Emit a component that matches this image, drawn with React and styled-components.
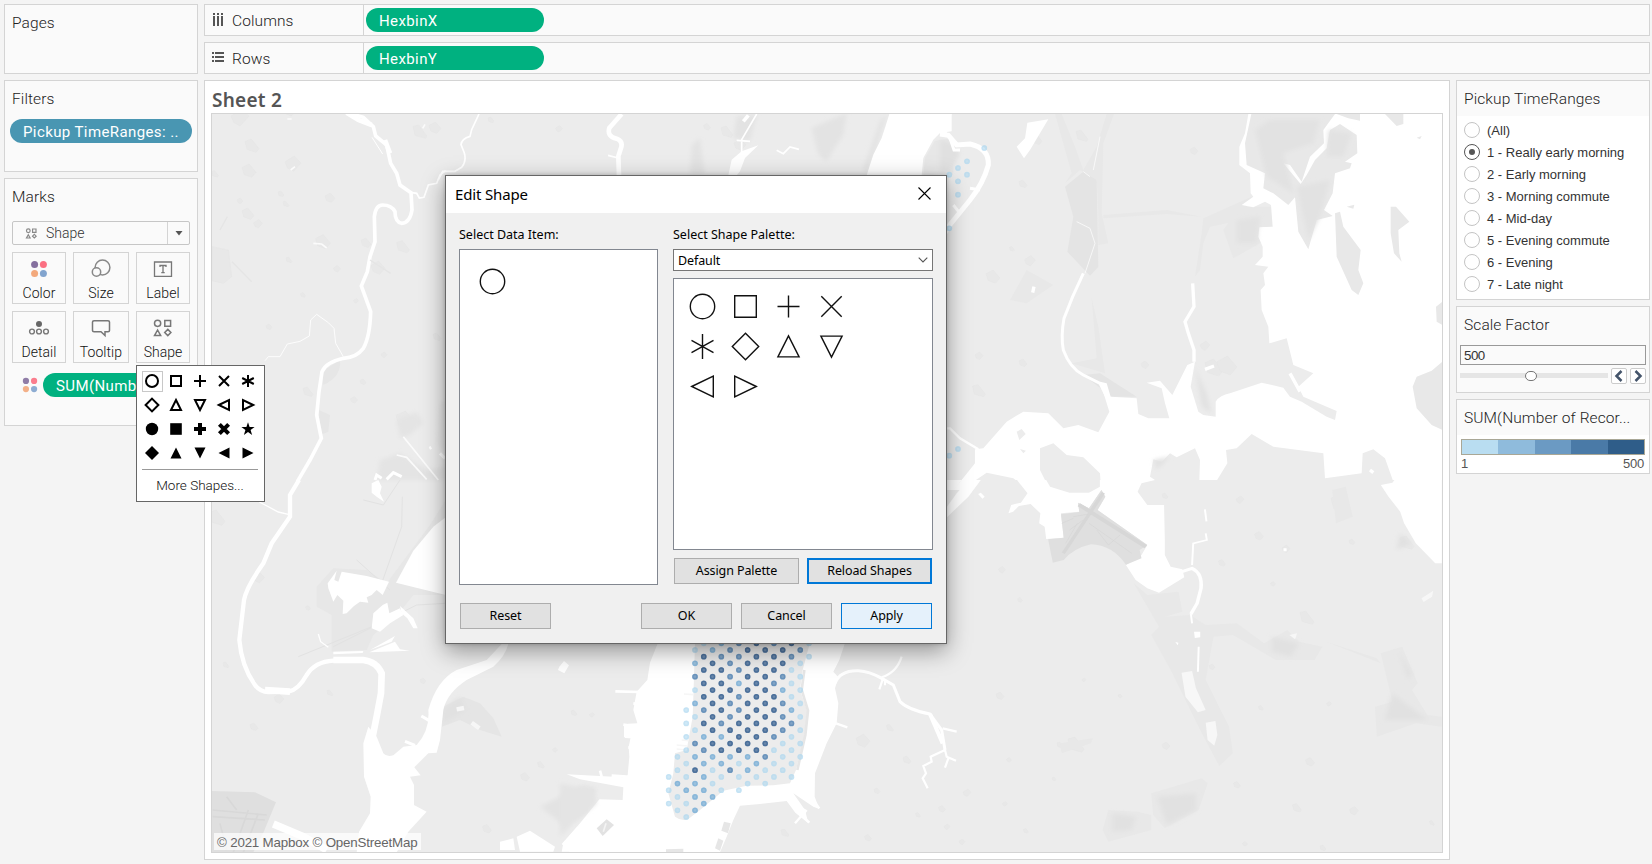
import React from "react";
import styled, { createGlobalStyle, css } from "styled-components";

const GlobalStyle = createGlobalStyle`
  * { box-sizing: border-box; }
  body { margin: 0; background: #f4f4f4; color: #333; overflow: hidden;
    font-family: Roboto, "Liberation Sans", sans-serif; }
`;

const Workbook = styled.div`
  position: relative;
  display: grid;
  grid-template-columns: 194px minmax(0, 1fr);
  column-gap: 6px;
  width: 1652px;
  height: 864px;
  padding: 4px 2px 4px 4px;
`;
const SideColumn = styled.aside`
  display: flex;
  flex-direction: column;
  gap: 6px;
`;
const Panel = styled.section`
  height: ${(p) => p.$height}px;
  border: 1px solid #d4d4d4;
  background: #fafafa;
`;
const PanelTitle = styled.h2`
  margin: 0;
  padding: 8px 0 0 7px;
  font-size: 15.5px;
  line-height: 20px;
  font-weight: 300;
  letter-spacing: ${(p) => p.$spacing ?? 0.1}px;
  color: #222;
  white-space: nowrap;
`;
const Pill = styled.div`
  display: flex;
  align-items: center;
  width: ${(p) => p.$width}px;
  height: 24px;
  padding: 1px 13px 0;
  border-radius: 12px;
  background: ${(p) => p.$color ?? "#00b180"};
  color: #fff;
  font-size: 15px;
  letter-spacing: ${(p) => p.$spacing ?? 0.4}px;
  white-space: nowrap;
  overflow: hidden;
`;
const FilterPills = styled.div`
  padding: 10px 0 0 5px;
`;
const MarksBody = styled.div`
  padding: 14px 7px 0;
`;
const MarkType = styled.div`
  display: flex;
  align-items: center;
  height: 24px;
  border: 1px solid #c6c6c6;
  border-radius: 2px;
  font-size: 14px;
  font-weight: 300;
  color: #333;
  & > svg:first-child { margin: 0 8px 0 12px; }
`;
const MarkArrow = styled.span`
  display: grid;
  place-items: center;
  width: 22px;
  height: 22px;
  margin-left: auto;
  border-left: 1px solid #d4d4d4;
`;
const MarkGrid = styled.div`
  display: grid;
  grid-template-columns: 54px 56px 54px;
  gap: 7px;
  margin-top: 7px;
`;
const MarkButton = styled.div`
  display: flex;
  flex-direction: column;
  align-items: center;
  height: 52px;
  padding-top: 5px;
  border: 1px solid #d4d4d4;
  font-size: 14px;
  font-weight: 300;
  line-height: 18px;
  letter-spacing: 0.05px;
  color: #111;
  & > svg { margin-bottom: 4px; }
`;
const EncodingRow = styled.div`
  display: flex;
  align-items: center;
  gap: 5px;
  margin-top: 10px;
  padding-left: 10px;
`;

const MainColumn = styled.main`
  display: flex;
  flex-direction: column;
  gap: 6px;
`;
const Shelf = styled.div`
  display: flex;
  align-items: center;
  height: 32px;
  border: 1px solid #d4d4d4;
  background: #fafafa;
`;
const ShelfLabel = styled.div`
  display: flex;
  align-items: center;
  gap: 8px;
  width: 159px;
  height: 30px;
  margin-right: 2px;
  padding: 1px 0 0 7px;
  border-right: 1px solid #d4d4d4;
  font-size: 15.5px;
  font-weight: 300;
  letter-spacing: 0.1px;
  color: #222;
  & > svg { margin-top: -2px; }
`;
const Content = styled.div`
  display: grid;
  grid-template-columns: 1246px 194px;
  column-gap: 6px;
`;
const Sheet = styled.section`
  height: 780px;
  padding: 7px 6px 0;
  border: 1px solid #d4d4d4;
  background: #fff;
`;
const SheetTitle = styled.h1`
  margin: 0;
  height: 25px;
  padding-left: 1px;
  font: 600 19px/24px "Noto Sans", sans-serif;
  letter-spacing: 0.25px;
  color: #555;
`;
const MapFrame = styled.div`
  position: relative;
  width: 1232px;
  height: 740px;
  border: 1px solid #d4d4d4;
  & > svg { display: block; }
`;
const Attribution = styled.div`
  position: absolute;
  left: 2px;
  bottom: 2px;
  width: 207px;
  height: 17px;
  padding-left: 3px;
  background: rgba(255, 255, 255, 0.72);
  color: #666;
  font: 13.33px/19px "Liberation Sans", sans-serif;
  letter-spacing: -0.18px;
  white-space: nowrap;
`;

const Legends = styled.aside`
  display: flex;
  flex-direction: column;
  gap: 6px;
`;
const Card = styled.section`
  height: ${(p) => p.$height}px;
  border: 1px solid #d4d4d4;
  background: ${(p) => (p.$grey ? "#fafafa" : "#fff")};
`;
const CardHeader = styled.div`
  height: 35px;
  background: #fafafa;
`;
const RadioList = styled.div`
  padding: 3px 0 0 7px;
`;
const RadioRow = styled.div`
  display: flex;
  align-items: center;
  gap: 7px;
  height: 22px;
  font: 13px/22px "Liberation Sans", sans-serif;
  color: #333;
`;
const RadioText = styled.span`
  padding-top: 2px;
`;
const Radio = styled.span`
  display: grid;
  place-items: center;
  width: 16px;
  height: 16px;
  border: 1px solid ${(p) => (p.$on ? "#555" : "#c4c4c4")};
  border-radius: 50%;
  background: #fff;
  &::after {
    content: "";
    width: 6px;
    height: 6px;
    border-radius: 50%;
    background: ${(p) => (p.$on ? "#555" : "transparent")};
  }
`;
const NumberBox = styled.div`
  width: 186px;
  height: 20px;
  margin: 10px 0 0 3px;
  padding-left: 3px;
  border: 1px solid #999;
  font: 13.33px/19px "Liberation Sans", sans-serif;
  letter-spacing: -0.5px;
  color: #333;
`;
const SliderRow = styled.div`
  display: flex;
  align-items: center;
  gap: 3px;
  margin: 3px 0 0 3px;
`;
const Track = styled.div`
  display: flex;
  align-items: center;
  width: 148px;
  height: 5px;
  margin-top: -1px;
  background: #e5e5e5;
`;
const Knob = styled.span`
  width: 12px;
  height: 10px;
  margin-left: 65px;
  border: 1px solid #777;
  border-radius: 5px;
  background: #fff;
`;
const Stepper = styled.span`
  display: grid;
  place-items: center;
  width: 16px;
  height: 16px;
  border: 1px solid #ccc;
  border-radius: 2px;
  background: #fff;
`;
const Ramp = styled.div`
  display: flex;
  width: 184px;
  height: 16px;
  margin: 4px 0 0 4px;
  border: 1px solid #a9a796;
`;
const RampStep = styled.span`
  flex: 1;
  background: ${(p) => p.$color};
`;
const RampLabels = styled.div`
  display: flex;
  justify-content: space-between;
  padding: 0 5px 0 4px;
  font: 13px/17px "Liberation Sans", sans-serif;
  letter-spacing: -0.2px;
  color: #555;
`;

const ShapeMenu = styled.div`
  position: absolute;
  left: 136px;
  top: 365px;
  width: 129px;
  height: 137px;
  padding: 3px 5px;
  border: 1px solid #666;
  background: #fff;
`;
const ShapeGrid = styled.div`
  display: grid;
  grid-template-columns: repeat(5, 24px);
  grid-auto-rows: 24px;
  margin-left: -2px;
`;
const ShapeCell = styled.span`
  display: grid;
  place-items: center;
  width: 21px;
  height: 21px;
  margin: 2px;
  border: 1px solid ${(p) => (p.$on ? "#c8c8c8" : "transparent")};
`;
const MenuFooter = styled.div`
  width: 116px;
  margin-top: 4px;
  padding-top: 5px;
  border-top: 1px solid #999;
  font-size: 13.5px;
  font-weight: 300;
  line-height: 20px;
  text-align: center;
  color: #111;
`;

const Dialog = styled.div`
  position: absolute;
  left: 445px;
  top: 175px;
  width: 502px;
  height: 469px;
  border: 1px solid #666;
  background: #f0f0f0;
  color: #000;
  box-shadow: 0 7px 22px rgba(0, 0, 0, 0.38), 0 0 4px rgba(0, 0, 0, 0.2);
  font-family: "Noto Sans", sans-serif;
`;
const DialogBar = styled.header`
  display: flex;
  align-items: center;
  justify-content: space-between;
  height: 37px;
  padding: 0 15px 2px 9px;
  background: #fff;
  font-size: 15px;
  letter-spacing: -0.15px;
`;
const DialogColumns = styled.div`
  display: grid;
  grid-template-columns: 199px 260px;
  column-gap: 15px;
  height: 376px;
  padding: 12px 0 0 13px;
`;
const Field = styled.div`
  display: flex;
  flex-direction: column;
`;
const FieldLabel = styled.div`
  height: 24px;
  font-size: 12.5px;
  line-height: 19px;
`;
const Select = styled.div`
  display: flex;
  align-items: center;
  justify-content: space-between;
  height: 22px;
  margin-bottom: 7px;
  padding: 0 4px;
  border: 1px solid #767676;
  background: #fff;
  font-size: 12.5px;
  letter-spacing: -0.1px;
`;
const ListBox = styled.div`
  height: ${(p) => p.$height}px;
  padding: ${(p) => p.$pad};
  border: 1px solid #828790;
  background: #fff;
`;
const Palette = styled.div`
  display: grid;
  grid-template-columns: repeat(4, 43px);
  grid-auto-rows: 40px;
  place-items: center;
`;
const ButtonRow = styled.div`
  display: flex;
  gap: ${(p) => p.$gap}px;
  padding: ${(p) => p.$pad};
`;
const Button = styled.button`
  width: ${(p) => p.$width ?? 91}px;
  height: 26px;
  padding: 0;
  border: 1px solid #adadad;
  background: #e1e1e1;
  color: #000;
  font: 12.5px/22px "Noto Sans", sans-serif;
  letter-spacing: -0.1px;
  ${(p) => p.$focus && css`border: 2px solid #0078d7;`}
  ${(p) => p.$hot && css`border-color: #0078d7; background: #e5f1fb;`}
  ${(p) => p.$push && css`margin-right: 81px;`}
`;

/* ---------- shape glyphs ---------- */
const OUTLINES = {
  circle: <circle r="12.2" />,
  square: <path d="M-10.8-10.8H10.8V10.8H-10.8Z" />,
  plus: <path d="M-11 0H11M0-11V11" />,
  cross: <path d="M-10.2-10.2L10.2 10.2M10.2-10.2L-10.2 10.2" />,
  star: <path d="M0-12.5V12.5M-11-6.2L11 6.2M11-6.2L-11 6.2" />,
  diamond: <path d="M0-13.2L13.2 0L0 13.2L-13.2 0Z" />,
  up: <path d="M0-10.6L10.6 10.4H-10.6Z" />,
  down: <path d="M0 10.6L10.6-10.4H-10.6Z" />,
  left: <path d="M-10.8 0L10.8-10.4V10.4Z" />,
  right: <path d="M10.8 0L-10.8-10.4V10.4Z" />,
};
const OUTLINE_NAMES = Object.keys(OUTLINES);

const PaletteGlyph = ({ name }) => (
  <svg width="29" height="29" viewBox="-14.5 -14.5 29 29" fill="none" stroke="#111" strokeWidth="1.4">
    {OUTLINES[name]}
  </svg>
);

const MENU = [
  <circle r="6" />,
  <path d="M-5-5H5V5H-5Z" />,
  <path d="M-6 0H6M0-6V6" />,
  <path d="M-5-5L5 5M5-5L-5 5" />,
  <path d="M0-6V6M-5.8-3L5.8 3M5.8-3L-5.8 3" />,
  <path d="M0-6.4L6.4 0L0 6.4L-6.4 0Z" />,
  <path d="M0-5L5 5H-5Z" />,
  <path d="M0 5L5-5H-5Z" />,
  <path d="M-5.2 0L5-5V5Z" />,
  <path d="M5.2 0L-5-5V5Z" />,
  <circle r="6.2" fill="#000" stroke="none" />,
  <path d="M-5.8-5.8H5.8V5.8H-5.8Z" fill="#000" stroke="none" />,
  <path d="M-6 0H6M0-6V6" strokeWidth="4" />,
  <path d="M-4.6-4.6L4.6 4.6M4.6-4.6L-4.6 4.6" strokeWidth="4" />,
  <path d="M0-6.8L1.6-2H6.6L2.6 1L4.1 6L0 3L-4.1 6L-2.6 1L-6.6-2H-1.6Z" fill="#000" stroke="none" />,
  <path d="M0-7L7 0L0 7L-7 0Z" fill="#000" stroke="none" />,
  <path d="M0-5.5L5.5 5.5H-5.5Z" fill="#000" stroke="none" />,
  <path d="M0 5.5L5.5-5.5H-5.5Z" fill="#000" stroke="none" />,
  <path d="M-5.5 0L5.5-5.5V5.5Z" fill="#000" stroke="none" />,
  <path d="M5.5 0L-5.5-5.5V5.5Z" fill="#000" stroke="none" />,
];
const MenuGlyph = ({ children }) => (
  <svg width="17" height="17" viewBox="-8 -8 17 17" fill="none" stroke="#000" strokeWidth="2">
    {children}
  </svg>
);

/* ---------- mark icons ---------- */
const ColorIcon = ({ size = 22, r = 3.5, d = 4.4, opacity = 1 }) => (
  <svg width={size} height={size} viewBox="-11 -11 22 22" opacity={opacity}>
    <circle cx={-d} cy={-d} r={r} fill="#85709f" />
    <circle cx={d} cy={-d} r={r} fill="#fb7082" />
    <circle cx={-d} cy={d} r={r} fill="#f3a97c" />
    <circle cx={d} cy={d} r={r} fill="#82a4ce" />
  </svg>
);
const ShapesIcon = ({ size = 22, color = "#777", weight = 1.5 }) => (
  <svg width={size} height={size} viewBox="0 0 22 22" fill="none" stroke={color} strokeWidth={weight}>
    <circle cx="5.6" cy="6.3" r="3.1" />
    <path d="M12.8 3.4H18.6V9.2H12.8ZM5.6 13L8.7 18.6H2.5ZM15.8 12.4L18.9 15.5L15.8 18.6L12.7 15.5Z" />
  </svg>
);
const SizeIcon = () => (
  <svg width="22" height="22" viewBox="0 0 22 22" fill="#fafafa" stroke="#888" strokeWidth="1.5">
    <circle cx="12.5" cy="9.5" r="7.4" />
    <circle cx="6.5" cy="14" r="4.2" />
  </svg>
);
const LabelIcon = () => (
  <svg width="22" height="22" viewBox="0 0 22 22" fill="none" stroke="#777" strokeWidth="1.3">
    <path d="M2.5 4H19.5V18.3H2.5Z" />
    <path d="M8 9V7.5H14V9M11 7.5V14.5M9.3 14.7H12.7" />
  </svg>
);
const DetailIcon = () => (
  <svg width="22" height="22" viewBox="0 0 22 22" fill="none" stroke="#777" strokeWidth="1.4">
    <circle cx="11" cy="7" r="3" fill="#666" stroke="none" />
    <circle cx="4" cy="14.5" r="2.4" />
    <circle cx="11" cy="14.5" r="2.4" />
    <circle cx="18" cy="14.5" r="2.4" />
  </svg>
);
const TooltipIcon = () => (
  <svg width="22" height="22" viewBox="0 0 22 22" fill="none" stroke="#777" strokeWidth="1.5">
    <path d="M4 3.8H18Q19.5 3.8 19.5 5V13.6Q19.5 14.8 18 14.8H15V18.5L11 14.8H4Q2.5 14.8 2.5 13.6V5Q2.5 3.8 4 3.8Z" />
  </svg>
);

const MARKS = [
  ["Color", <ColorIcon />], ["Size", <SizeIcon />], ["Label", <LabelIcon />],
  ["Detail", <DetailIcon />], ["Tooltip", <TooltipIcon />], ["Shape", <ShapesIcon />],
];

/* ---------- hexbin marks ---------- */
const LEVELS = { a: "#a9d6ef", b: "#6ea8d4", c: "#4479ae", d: "#1f4e85" };
/* One string per half-row; each character is a bin, "." is an empty bin. */
const BINS = [
  "..abcdcda", ".abcdddc", "..dccddca", ".bdcddda", "..ddcdda", ".cdcddca", "..ddbdca",
  ".addddba", "..ddcdda", ".bdcddca", ".acdcddb", ".adcddca", ".adcdddc", ".addddca",
  ".abbddca", ".cddddaa", ".acdddaa", "abbbbcaa", ".abbabaa", "adacbaa", "aabaaaaa",
  "bba.aa", "abbaa", "abb", "aab", "ab", ".a",
];
const NORTH_BINS = [
  [984.3, 148], [967, 161.3], [958, 168], [949.3, 174.7], [967, 174.7],
  [958, 181.3], [958, 194.7], [949.3, 228.3], [958, 449], [949.3, 455.7],
];
const Bin = ({ x, y, level }) => (
  <g opacity={level === "a" ? 0.75 : 0.85}>
    <circle cx={x} cy={y} r="2.85" fill={LEVELS[level]} opacity="0.75" />
    <circle cx={x} cy={y} r="2" fill="none" stroke={LEVELS[level]} strokeWidth="1.3" opacity="0.7" />
  </g>
);
const Hexbins = () => (
  <g>
    {BINS.flatMap((row, r) =>
      [...row].map((level, i) => {
        if (level === ".") return null;
        const col = r % 2 ? i * 2 + 1 : i * 2;
        return <Bin key={`${r}-${i}`} x={668.7 + col * 8.77} y={643.3 + r * 6.68} level={level} />;
      })
    )}
    {NORTH_BINS.map(([x, y]) => <Bin key={`${x}-${y}`} x={x} y={y} level="a" />)}
  </g>
);

/* ---------- base map ---------- */
const THIRD = 1 / 3;
const at = (x, y, sx = THIRD) => `translate(${x} ${y}) scale(${sx} ${THIRD})`;
const PARKS = [
  [240, 118, 18], [290, 112, 9], [252, 146, 14], [293, 164, 16], [249, 171, 14], [215, 174, 7], [240, 201, 6],
  [248, 214, 12], [286, 204, 6], [330, 198, 10], [281, 194, 6], [258, 224, 9], [323, 242, 15], [403, 247, 13],
  [337, 269, 7], [366, 243, 10], [289, 260, 6], [378, 268, 14], [303, 295, 5], [356, 301, 5], [269, 327, 6],
  [437, 337, 8], [384, 355, 6], [363, 382, 6], [308, 392, 10], [354, 400, 7], [406, 421, 20], [420, 132, 14],
  [435, 128, 12], [491, 120, 6], [559, 129, 7], [707, 127, 7], [727, 132, 12], [740, 145, 12], [1037, 140, 10],
  [1082, 136, 12], [1194, 151, 8], [1023, 184, 8], [1030, 261, 11], [993, 277, 14], [1012, 249, 5], [979, 356, 8],
  [1023, 363, 8], [979, 391, 13], [1145, 365, 8], [1214, 368, 18], [1205, 346, 10], [1227, 366, 20], [217, 518, 16],
  [259, 578, 11], [308, 608, 5], [226, 665, 6], [279, 699, 10], [254, 727, 8], [330, 693, 6], [423, 681, 6],
  [574, 713, 6], [592, 715, 5], [525, 777, 9], [541, 765, 7], [555, 750, 5], [487, 829, 9], [890, 728, 7],
  [863, 741, 14], [907, 760, 8], [947, 827, 6], [1000, 696, 8], [1060, 745, 6], [1002, 570, 7], [1020, 600, 5],
  [1076, 745, 16], [1166, 746, 8], [1165, 496, 6], [1240, 500, 8], [1259, 536, 9], [1340, 504, 18], [1286, 549, 8],
  [1352, 542, 6], [1407, 543, 14], [1273, 584, 5], [1222, 563, 7], [1307, 618, 14], [1212, 667, 6], [1261, 708, 5],
  [1329, 704, 5], [1310, 762, 9], [1297, 808, 9], [1354, 811, 9], [1237, 785, 7], [1432, 823, 5], [1245, 844, 5],
  [1323, 848, 6], [967, 793, 8], [942, 809, 7], [918, 815, 5], [962, 842, 6], [868, 838, 7], [785, 833, 8],
  [1009, 760, 5], [1054, 779, 4], [1084, 680, 4], [1120, 696, 4], [1026, 831, 5], [1005, 804, 5], [877, 791, 6],
];
const parkPath = ([x, y, s], i) => {
  const t = (i * 37) % 100 / 100;
  return `M${x - s * 0.5} ${y - s * (0.1 + t * 0.3)}L${x + s * (0.1 - t * 0.2)} ${y - s * 0.5}L${x + s * 0.5} ${y - s * 0.1 + t * s * 0.4}L${x + s * t * 0.4} ${y + s * 0.45}L${x - s * 0.35} ${y + s * 0.25}Z`;
};

const BaseMap = () => (
  <svg width="1230" height="738" viewBox="212 114 1230 738">
    <defs>
      <filter id="soft" x="-20%" y="-20%" width="140%" height="140%">
        <feGaussianBlur stdDeviation="7" />
      </filter>
    </defs>
    <rect x="212" y="114" width="1230" height="738" fill="#ececec" />
    <g fill="#e8e8e8" stroke="#e5e5e5" strokeWidth=".5">
      {PARKS.map((p, i) => <path key={i} d={parkPath(p, i)} />)}
    </g>

    {/* Passaic river */}
    <g transform={at(200, 110)} fill="none" stroke="#fff">
      <path d="M36 410L85 420L95 500L70 520L36 512Z" fill="#e8e8e8" stroke="#e5e5e5" strokeWidth="2" />
      <path d="M366 785L420 750Q425 800 370 825ZM357 900L390 915L385 965L360 975Z" fill="#e6e6e6" stroke="none" />
      <g fill="#e4e4e4" stroke="none" filter="url(#soft)">
        <path d="M590 930L650 905L670 940L630 975L600 985ZM540 1050L600 1030L680 1080L735 1070V1110H530ZM720 880L737 870V1040L715 1000Z" />
      </g>
      <path d="M440 8L490 22L520 50L527 78L560 105L572 160L590 190L600 225L633 248L636 300Q630 338 605 340Q585 335 585 305Q575 285 548 285Q527 285 523 320L525 395L510 440L502 485L484 528L512 605Q510 680 490 715Q470 742 430 745Q378 757 366 785L357 845L350 915L364 985L330 1050L292 1115" strokeWidth="11" />
      <path d="M440 8L475 30L515 45M555 90L570 130" strokeWidth="14" />
      <path d="M516 82L548 132" strokeWidth="3" />
      <path d="M636 248L650 250L658 264L672 262L685 225L710 220L720 195L737 182" strokeWidth="5" />
      <path d="M195 752L205 740L240 740L262 702L300 694L328 678L332 630L350 613L385 638L402 655L407 700L430 740" strokeWidth="2.6" />
      <path d="M340 400L365 402L380 414M272 180L285 170M262 27L275 27M668 55L675 43M610 980L715 1110M590 1035L620 1042L680 1108" strokeWidth="5" opacity=".8" />
      <path d="M60 360L82 320M96 455L155 515M510 450L572 490" stroke="#e5e5e5" strokeWidth="4" />
      <path d="M525 1110L530 1095L545 1105M560 1108L580 1088L605 1100M688 1015L694 1012M720 1030L735 1045" strokeWidth="9" />
    </g>

    {/* Newark bay and Kearny */}
    <g transform={at(200, 480)}>
      <path d="M350 320L400 265L500 270L560 310L690 135L737 60V345L640 345L600 395L520 465L500 510L395 515L395 405L350 380Z" fill="#e7e7e7" />
      <path d="M490 60L550 75L600 0M607 50L605 140L545 310M470 240L570 330M400 500L650 375L737 370M295 530L540 430" fill="none" stroke="#e2e2e2" strokeWidth="3" />
      <path d="M36 933L165 937L228 967L190 1058L160 1117H36Z" fill="#dfdfdf" />
      <path d="M38 990L200 1005M38 1010L195 1020M100 1117L145 990M130 1117L175 1000M60 1030L80 1110M80 950L110 990" fill="none" stroke="#d8d8d8" strokeWidth="5" />
      <g fill="#fff">
        <path d="M588 308L640 212L700 140L737 112V345Z" />
        <path d="M425 275L500 288L567 305L548 345L530 330L515 345L500 352L505 368L480 365L462 378L440 400L428 402L430 362L412 345L400 365L385 325L383 310L410 272L403 300L415 305Z" />
        <path d="M520 400L548 375L562 368L568 400L600 385L610 405L570 430L540 455L515 445ZM508 517L585 485L600 508L630 512ZM510 510L585 468L575 485ZM400 515L490 513L488 519L400 523Z" />
        <path d="M600 378L640 415L653 445L640 445L622 415L605 400Z" />
        <path d="M515 10L535 0L545 20L540 40L552 65L530 50L515 38Z" />
        <path d="M1078 560L1092 543L1107 556L1093 580L1074 570Z" />
      </g>
      <g fill="none" stroke="#fff">
        <path d="M297 0L270 45L270 110L215 190L190 250Q140 320 132 360L118 480Q125 560 165 615Q180 636 205 636L265 635Q295 630 320 585Q345 545 400 542L480 538Q538 545 545 590L540 650L525 740L505 830" strokeWidth="13" />
        <path d="M195 630L270 635M400 540L490 540Q530 545 545 580L543 640L530 710L512 800" strokeWidth="20" />
        <path d="M178 66L235 96L268 104M355 462L362 485L385 502" strokeWidth="4" />
        <path d="M220 1032L310 1070L380 1110" strokeWidth="22" />
      </g>
      <path d="M730 680L790 650L840 670L880 715L905 770L840 750L780 720L725 740Z" fill="#e5e5e5" />
      <path d="M725 690L780 650L800 690L730 730Z" fill="#e1e1e1" filter="url(#soft)" />
      <path d="M490 790L505 740L530 770L550 820Q560 832 580 826L610 800L650 795Q690 750 685 690Q710 600 770 570L860 540L905 492H925Q915 530 880 560L800 600Q740 640 730 690L720 780L710 818L685 820L643 862L662 886L630 890L642 915V975L680 995L625 1055L590 1117H470L477 1055L510 1000L512 950L492 890Z" fill="#fff" />
      <path d="M664 708L688 722M615 784L645 796" stroke="#fff" strokeWidth="9" />
      <path d="M770 688L792 684M815 728L838 745" stroke="#f6f6f6" strokeWidth="13" />
      <path d="M1020 980L1150 915L1190 925L1160 1000L1090 1035Z" fill="#e3e3e3" filter="url(#soft)" />
      <path d="M900 1085L940 1075L945 1110H900ZM950 1070L990 1052L1065 1100L1060 1115H960ZM1085 1115L1090 1090L1120 1085L1110 1115Z" fill="#fff" />
    </g>

    {/* Hudson and the East River mouth */}
    <g transform={at(560, 640)}>
      <path d="M297 0L270 68L262 120L230 155L220 210L232 250L192 252V292L212 292L206 320L208 350L203 405L190 412L20 403L60 418L190 442L188 480L118 478L60 550L5 612L30 637H480L500 590L520 540L540 497L600 492L680 483L706 518L745 550L735 510L700 460L760 500L778 507L764 470L765 400L800 310L830 250L835 190L825 145L835 112L820 95L838 60L858 0Z" fill="#fff" />
      <path d="M166 154L240 156M220 190L250 195M190 254L236 262M195 290L235 292M205 322L232 326M120 392L125 410M155 407L200 410" stroke="#fff" strokeWidth="8" />
      <path d="M405 0L402 110L398 230L380 330L345 340L340 400L325 460L345 530Q365 545 385 537L420 510L490 452L560 437L640 436L690 430L708 390L720 340L735 290L742 215L720 150L728 90L752 0Z" fill="#ececec" />
      <path d="M733 90L725 150L744 212L736 285L712 390" fill="none" stroke="#e6e6e6" strokeWidth="8" />
      <path d="M365 300L385 302M350 315L382 318M350 327L380 330M372 162L400 164" stroke="#f6f6f6" strokeWidth="5" />
      <path d="M110 565L140 538L162 555L128 588Z" fill="#e2e2e2" />
      <path d="M138 550L130 575" stroke="#f4f4f4" strokeWidth="5" />
      <path d="M318 628L370 626V637H318ZM465 625L475 595L490 602L480 632ZM484 572L492 545L512 550L504 580Z" fill="#e6e6e6" />
      <path d="M690 440L760 480L778 505M690 480L740 515M700 500L748 548M705 550L740 510M715 500L725 530M828 250L862 262" stroke="#fff" strokeWidth="7" fill="none" />
      <path d="M0 430L50 440L100 450L110 490L40 550L0 590Z" fill="#e4e4e4" filter="url(#soft)" />
      <g fill="none" stroke="#fff" strokeWidth="9">
        <path d="M825 130Q840 90 895 92Q930 95 960 112L1000 135L1020 185Q1045 210 1110 222L1145 270L1155 330" />
        <path d="M1110 222L1148 310" strokeWidth="12" />
        <path d="M1155 330L1112 350L1115 365L1090 378L1098 400L1088 415L1103 445M965 112Q1010 98 1025 50M968 118L958 148M975 120V136M1148 265L1190 275M1155 330L1160 350L1188 362M1165 355L1155 383" strokeWidth="6.5" />
      </g>
    </g>

    {/* Hackensack and the upper Hudson */}
    <g transform={at(430, 108)}>
      <g fill="#e3e3e3" filter="url(#soft)">
        <path d="M780 200L785 110L810 90L825 200ZM1145 60L1250 15L1240 80L1190 160L1165 140ZM920 25L980 20L960 100L910 90ZM1350 40L1370 20L1340 120L1310 200L1300 180Z" />
      </g>
      <g fill="none" stroke="#fff">
        <path d="M25 216L38 190L75 190L95 178Q110 160 103 135L93 110Q95 92 120 85L125 65L147 18" strokeWidth="5" />
        <path d="M575 18L538 60Q530 85 560 92Q580 100 573 120L565 145L567 202" strokeWidth="14" />
        <path d="M534 142L565 150M980 18L935 95V135M920 97L960 100" strokeWidth="5" />
        <path d="M1040 127L1060 137L1080 117L1107 124" strokeWidth="5" />
        <path d="M940 40L955 22" strokeWidth="11" />
      </g>
      <path d="M895 202L905 155L935 130L985 112L945 150L930 190L920 202ZM1378 18L1368 50L1355 90L1330 140L1310 202H1475L1480 150L1510 95L1530 75L1565 70V18Z" fill="#fff" />
      <path d="M1480 202L1485 150L1515 98L1570 90V202Z" fill="#e7e7e7" />
    </g>

    {/* Bronx, Long Island Sound and the East River */}
    <g transform={at(940, 110)}>
      <path d="M0 90L35 100L60 130L30 190H0Z" fill="#e0e0e0" filter="url(#soft)" />
      <path d="M345 12L365 12L405 110L430 180L470 110L500 12H522L490 100L485 310L505 400L475 405V310L470 210L420 180L375 220L395 190ZM455 565L475 650L495 790L395 760L470 745ZM490 315L680 300L785 320L680 312L490 325ZM790 325L935 260L900 330L860 340L810 350L790 400L780 480L765 500L785 370ZM210 570L260 480L340 525L260 580ZM850 360L900 290L1000 290V350L960 400L880 445Z" fill="#e8e8e8" />
      <path d="M375 230L430 185L470 210L475 470L450 497L382 425L400 320ZM480 790L590 860H515L430 795Z" fill="#e4e4e4" />
      <g fill="none" stroke="#fff">
        <path d="M0 72L25 76L50 105L90 102Q148 115 145 165Q130 220 90 270L25 350L0 395" strokeWidth="15" />
        <path d="M30 85L42 120L60 120M40 285L60 310M90 235L120 240" strokeWidth="9" />
        <path d="M0 955L30 955L60 985L115 1018" strokeWidth="7" />
        <path d="M430 490L398 560L372 625Q362 680 370 720Q390 775 430 795L480 820L500 860" strokeWidth="9" />
        <path d="M480 80L460 180M410 335L450 355L465 400L435 490M430 185L450 200" strokeWidth="3" opacity=".7" />
        <path d="M758 520L762 590L735 635L745 670L762 720V755" strokeWidth="10" />
      </g>
      <path d="M0 12H35L20 70L0 78ZM262 38L325 28L270 120L252 145L230 110L255 85ZM480 815L500 820L512 860L590 865L595 912L625 925H688L675 880L665 835L620 818L660 812L697 855L742 765L765 755L752 830L775 905L790 915L827 920V875Q840 855 870 850L965 818L1030 833L1050 860L1085 875L1160 920L1185 930L1190 903L1160 890L1090 860L1075 830L1120 790L1060 765L1040 685L988 700L985 650L965 600L962 540L975 525L970 490L985 470L945 465L968 440V410L955 380L958 352L998 350L993 285L975 275L940 292L905 285L940 260L932 250L930 190L898 165V110L915 70L925 12H1507V1110H65L105 1060L105 1018L130 1015L200 935L250 905L325 910L370 955L415 945L475 967L508 905Z" fill="#fff" />
      <path d="M20 1110L65 1110L40 1140H0ZM40 1140L70 1105L150 1080L280 1140Z" fill="#fff" />
      <g fill="#e8e8e8">
        <path d="M934 12H1185L1150 60L1152 100L1110 140L1085 215L1050 165L1030 160L1082 222L1100 195L1125 150L1160 115L1170 60L1200 42L1250 75L1252 130L1215 155L1235 160L1230 175L1185 190L1178 250L1152 300L1178 318L1130 330L1105 418L1075 365L1065 262L1045 285L1000 250L970 235L975 190L920 165L915 100Z" />
        <path d="M1185 310L1200 305L1210 350L1262 420L1255 480L1270 520L1255 555L1235 540L1190 440ZM1352 290L1368 290L1408 335L1375 360L1378 430L1385 455L1362 430L1352 370ZM1335 12H1390V42L1370 48ZM1507 575L1488 590L1490 635L1507 645ZM1507 755L1475 782L1430 800L1418 830L1430 895L1475 945L1507 960ZM1220 290L1243 284L1240 296ZM1430 83L1445 78L1440 88ZM1190 12H1260V32L1225 25Z" />
        <path d="M230 965L245 957L257 972L238 990ZM240 1017L258 1022L250 1030ZM75 1140L100 1115L140 1088L220 1105L265 1140ZM300 1015L340 1000L380 1035L430 1042L480 1090L482 1120L450 1140H330L300 1080ZM595 1140L645 1110L630 1100L640 1048L665 1055L690 1030L710 1042L765 1015L780 1050L778 1112H830L862 1060L858 1020L890 1015L935 972L1000 1010L1150 1030L1155 1105L1265 1090L1268 1030L1300 1018L1335 1045L1360 1115L1350 1140Z" fill="#ececec" />
      </g>
      <g fill="#e2e2e2" filter="url(#soft)">
        <path d="M945 60L990 30L1140 30L1120 100L1030 130L1060 250L980 200ZM1165 60L1235 70L1210 140L1160 140ZM1070 230L1170 210L1140 320L1105 390ZM890 330L960 320L950 400L890 400ZM640 1050L690 1040L650 1080ZM765 770L800 850L815 910L785 890Z" />
      </g>
      <path d="M1290 1080L1300 1088M1050 790L1080 845M795 778L822 768M278 548L282 530" stroke="#fff" strokeWidth="10" />
    </g>

    {/* Queens, LaGuardia and Flushing */}
    <g transform={at(840, 480, 0.38903)}>
      <path d="M755 310L790 345L870 335L880 395L835 410L900 405L940 435L1020 430L1090 490L1150 450L1180 485L1240 500L1220 540H1120L1010 465L960 470L940 600L1000 740L1010 820L975 858L930 760L850 570L800 465L820 440ZM1390 520L1445 500L1485 610L1470 630L1510 705L1547 710V740L1480 730L1380 770L1375 680L1420 665ZM800 940L930 895L945 910L922 990L835 1045L805 1005ZM690 990L765 995L800 1005V1050L690 1085L675 1050ZM565 790L650 775L645 790L570 820ZM1265 30L1300 20L1318 110L1275 130ZM1250 485L1390 550L1380 535Z" fill="#e8e8e8" />
      <g fill="#e1e1e1" filter="url(#soft)">
        <path d="M815 950L915 940V990L840 1035ZM700 1000L760 1010L750 1050L700 1055ZM1110 470L1180 490L1160 530L1110 515ZM1420 640L1510 720L1400 720ZM1435 510L1470 580L1460 600ZM1400 540L1430 590ZM1440 160L1470 190L1430 210Z" />
      </g>
      <g fill="#fff">
        <path d="M330 0H362L330 50L275 112V80L300 40Z" />
        <path d="M455 0L482 40L465 68L440 75L433 100L445 95L460 78L490 72L515 100L512 130L526 140L530 177L575 173L568 100L615 95L612 68L640 85L672 30L682 50L662 90L790 195L775 225L735 255L760 300L790 325L820 338L885 292L880 268L850 260L835 225V180L833 75L790 75L765 35L775 10L810 0H668V20L640 38H590L540 20L530 0Z" />
        <path d="M1390 15L1420 8L1425 0H1547V250L1530 250L1480 190L1450 130L1440 95L1410 50Z" />
        <path d="M355 42L362 38L372 50L366 56ZM1140 205L1148 205V214H1140ZM910 455L926 455V472L912 474ZM862 486L870 488L868 496Z" />
      </g>
      <g fill="none" stroke="#fff">
        <path d="M865 280L905 265Q932 280 928 325L918 370L902 402" strokeWidth="9" />
        <path d="M902 402L905 430M922 500L920 575M938 88L942 124M905 255L908 190L943 180L940 160" strokeWidth="5" />
      </g>
      <path d="M878 578L905 573L915 625L940 690L920 697L888 650ZM940 728L965 723L970 765L962 797L945 780ZM1495 355L1525 332L1522 350L1500 366ZM1155 465L1175 460L1170 478Z" fill="#f7f7f7" />
      <path d="M568 103L615 96L612 68L640 85L672 30L682 50L662 90L790 195L770 210L775 235L735 254Q700 195 645 193Q600 205 575 240L547 248L535 178L575 173Z" fill="#dfdfdf" />
      <g fill="none" stroke="#d7d7d7">
        <path d="M614 74L786 200" strokeWidth="11" />
        <path d="M677 38L574 220" strokeWidth="9" />
        <path d="M640 130L750 220M660 150L690 195L720 165M600 110L650 100M590 150L625 120M580 190L610 130M570 130L600 115" strokeWidth="2" />
      </g>
    </g>
    <Hexbins />
  </svg>
);

const RANGES = [
  "(All)", "1 - Really early morning", "2 - Early morning", "3 - Morning commute",
  "4 - Mid-day", "5 - Evening commute", "6 - Evening", "7 - Late night",
];
const RAMP = ["#b9ddf1", "#8fbbdc", "#6b9ac3", "#4a7aa7", "#2f5d89"];

const Chevron = ({ flip }) => (
  <svg width="12" height="12" viewBox="0 0 12 12" fill="none" stroke="#44546a" strokeWidth="2.5">
    <path d={flip ? "M3.5 1L8.5 6L3.5 11" : "M8.5 1L3.5 6L8.5 11"} />
  </svg>
);

export default function App() {
  return (
    <Workbook>
      <GlobalStyle />
      <SideColumn>
        <Panel $height={70}><PanelTitle>Pages</PanelTitle></Panel>
        <Panel $height={92}>
          <PanelTitle>Filters</PanelTitle>
          <FilterPills><Pill $width={182} $color="#4996b2">Pickup TimeRanges: ..</Pill></FilterPills>
        </Panel>
        <Panel $height={248}>
          <PanelTitle>Marks</PanelTitle>
          <MarksBody>
            <MarkType>
              <ShapesIcon size={13} color="#888" weight={2} />
              Shape
              <MarkArrow><svg width="8" height="5"><path d="M.5 0H7.5L4 4.5Z" fill="#555" /></svg></MarkArrow>
            </MarkType>
            <MarkGrid>
              {MARKS.map(([name, icon]) => <MarkButton key={name}>{icon}{name}</MarkButton>)}
            </MarkGrid>
            <EncodingRow>
              <ColorIcon size={16} r={4.3} d={5.6} opacity={0.9} />
              <Pill $width={147}>SUM(Number of..</Pill>
            </EncodingRow>
          </MarksBody>
        </Panel>
      </SideColumn>

      <MainColumn>
        <Shelf>
          <ShelfLabel>
            <svg width="12" height="14" fill="#555"><path d="M1 0h2v2H1zM5 0h2v2H5zM9 0h2v2H9zM1 3h2v10H1zM5 3h2v10H5zM9 3h2v10H9z" /></svg>
            Columns
          </ShelfLabel>
          <Pill $width={178}>HexbinX</Pill>
        </Shelf>
        <Shelf>
          <ShelfLabel>
            <svg width="12" height="14" fill="#555"><path d="M0 1h2v2H0zM0 5h2v2H0zM0 9h2v2H0zM3 1h9v2H3zM3 5h9v2H3zM3 9h9v2H3z" /></svg>
            Rows
          </ShelfLabel>
          <Pill $width={178}>HexbinY</Pill>
        </Shelf>
        <Content>
          <Sheet>
            <SheetTitle>Sheet 2</SheetTitle>
            <MapFrame>
              <BaseMap />
              <Attribution>© 2021 Mapbox © OpenStreetMap</Attribution>
            </MapFrame>
          </Sheet>
          <Legends>
            <Card $height={220}>
              <CardHeader><PanelTitle>Pickup TimeRanges</PanelTitle></CardHeader>
              <RadioList>
                {RANGES.map((label, i) => (
                  <RadioRow key={label}><Radio $on={i === 1} /><RadioText>{label}</RadioText></RadioRow>
                ))}
              </RadioList>
            </Card>
            <Card $height={87} $grey>
              <PanelTitle>Scale Factor</PanelTitle>
              <NumberBox>500</NumberBox>
              <SliderRow>
                <Track><Knob /></Track>
                <Stepper><Chevron /></Stepper>
                <Stepper><Chevron flip /></Stepper>
              </SliderRow>
            </Card>
            <Card $height={75}>
              <CardHeader><PanelTitle>SUM(Number of Recor...</PanelTitle></CardHeader>
              <Ramp>{RAMP.map((c) => <RampStep key={c} $color={c} />)}</Ramp>
              <RampLabels><span>1</span><span>500</span></RampLabels>
            </Card>
          </Legends>
        </Content>
      </MainColumn>

      <ShapeMenu>
        <ShapeGrid>
          {MENU.map((glyph, i) => (
            <ShapeCell key={i} $on={i === 0}><MenuGlyph>{glyph}</MenuGlyph></ShapeCell>
          ))}
        </ShapeGrid>
        <MenuFooter>More Shapes...</MenuFooter>
      </ShapeMenu>

      <Dialog>
        <DialogBar>
          Edit Shape
          <svg width="13" height="13" stroke="#000" strokeWidth="1.1"><path d="M.5.5L12.5 12.5M12.5.5L.5 12.5" /></svg>
        </DialogBar>
        <DialogColumns>
          <Field>
            <FieldLabel>Select Data Item:</FieldLabel>
            <ListBox $height={336} $pad="17px 18px"><PaletteGlyph name="circle" /></ListBox>
          </Field>
          <Field>
            <FieldLabel>Select Shape Palette:</FieldLabel>
            <Select>
              Default
              <svg width="10" height="6" fill="none" stroke="#555" strokeWidth="1.1"><path d="M.7.7L5 5L9.3.7" /></svg>
            </Select>
            <ListBox $height={272} $pad="7px">
              <Palette>{OUTLINE_NAMES.map((n) => <PaletteGlyph key={n} name={n} />)}</Palette>
            </ListBox>
            <ButtonRow $gap={8} $pad="8px 0 0 1px">
              <Button $width={125}>Assign Palette</Button>
              <Button $width={125} $focus>Reload Shapes</Button>
            </ButtonRow>
          </Field>
        </DialogColumns>
        <ButtonRow $gap={9} $pad="14px 0 0 14px">
          <Button $push>Reset</Button>
          <Button>OK</Button>
          <Button>Cancel</Button>
          <Button $hot>Apply</Button>
        </ButtonRow>
      </Dialog>
    </Workbook>
  );
}
